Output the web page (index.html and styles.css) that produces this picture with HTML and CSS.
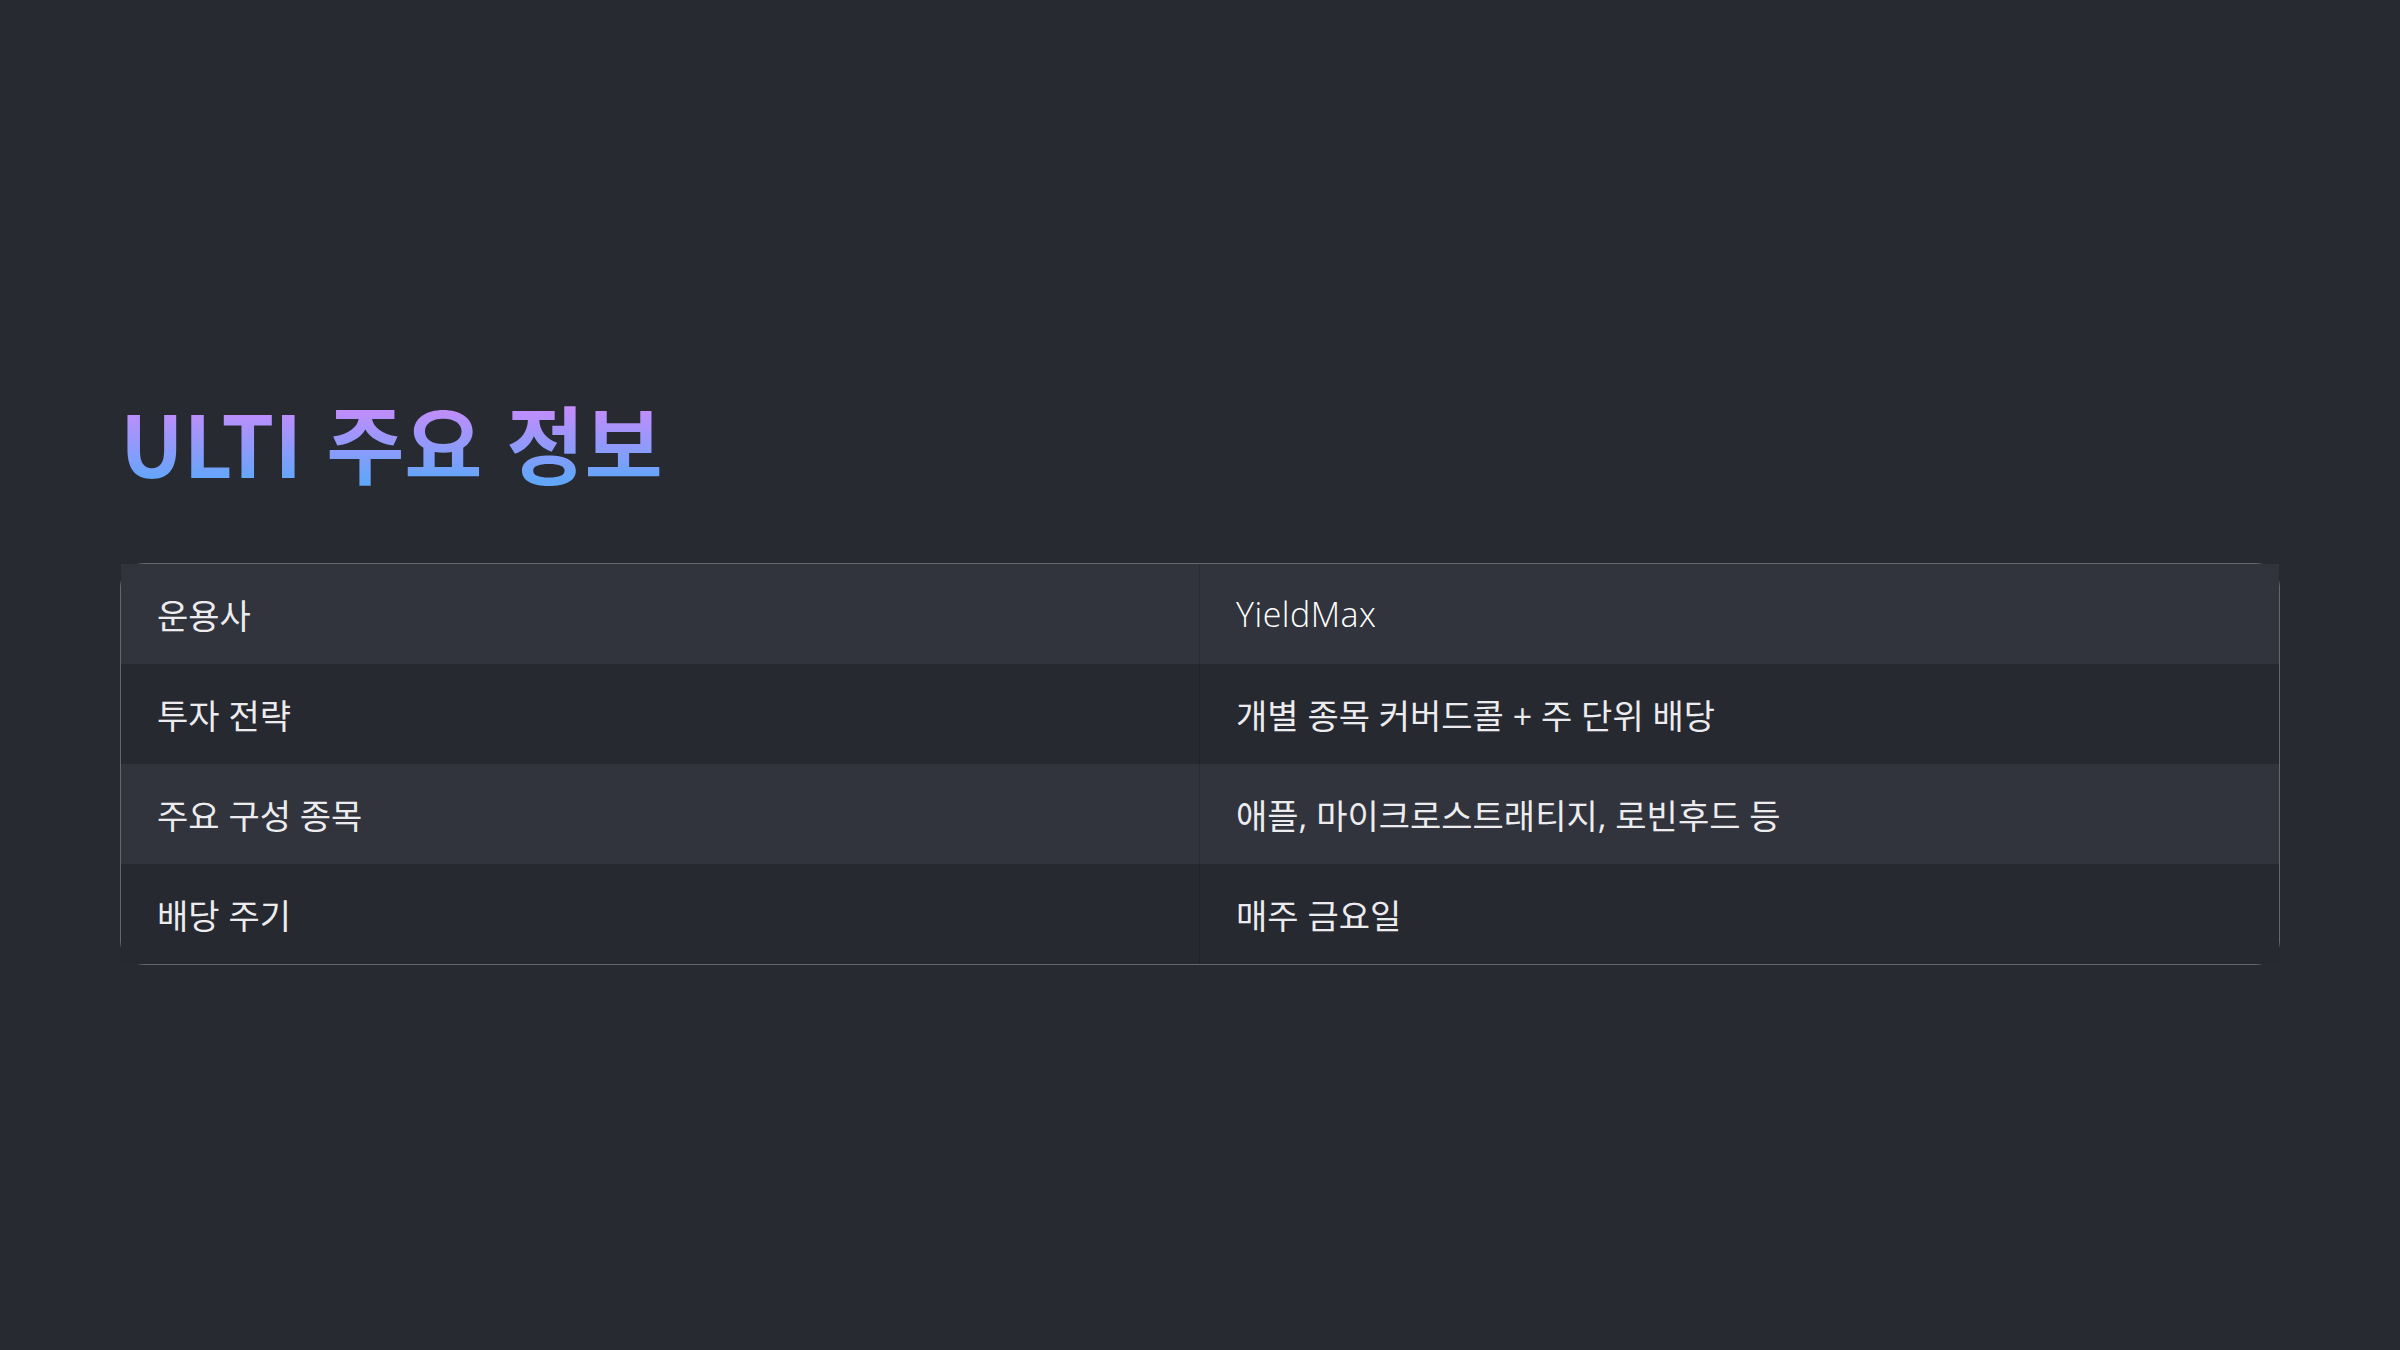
FILE: index.html
```html
<!DOCTYPE html>
<html lang="ko">
  <head>
    <meta charset="UTF-8" />
    <meta name="viewport" content="width=device-width, initial-scale=1.0" />
    <title>ULTI 주요 정보</title>
    <link rel="stylesheet" href="styles.css">
  </head>
  <body>
    <div class="slide">
      <h1 class="slide-title">ULTI 주요 정보</h1>

      <!-- key facts table -->
      <table class="info-table">
        <tbody>
          <tr>
            <td>운용사</td>
            <td><span class="latin">YieldMax</span></td>
          </tr>
          <tr>
            <td>투자 전략</td>
            <td>개별 종목 커버드콜 + 주 단위 배당</td>
          </tr>
          <tr>
            <td>주요 구성 종목</td>
            <td>애플, 마이크로스트래티지, 로빈후드 등</td>
          </tr>
          <tr>
            <td>배당 주기</td>
            <td>매주 금요일</td>
          </tr>
        </tbody>
      </table>
    </div>
  </body>
</html>
```

FILE: styles.css
```css
html, body {
  margin: 0;
  padding: 0;
}
body {
  background-color: #282a32;
  color: #ececef;
  font-family: "Open Sans", "Noto Sans CJK KR", sans-serif;
}
.slide {
  height: 100vh;
  box-sizing: border-box;
  padding: 0 120px;
  display: flex;
  flex-direction: column;
  justify-content: center;
}
.slide-title {
  margin: 0 0 66px 0;
  font-family: "Noto Sans CJK KR", sans-serif;
  font-size: 85px;
  font-weight: 700;
  line-height: 112px;
  align-self: flex-start;
  background: linear-gradient(to bottom, #c58cfc 20%, #62a6fa 85%);
  -webkit-background-clip: text;
  background-clip: text;
  color: transparent;
}

.info-table {
  width: 100%;
  border-collapse: separate;
  border-spacing: 0;
  border: 1px solid #64676e;
  border-radius: 24px;
}
.info-table td {
  width: 50%;
  height: 100px;
  padding: 0 36px;
  vertical-align: middle;
  font-size: 34px;
  font-weight: 400;
}
.info-table td:first-child {
  border-right: 1px solid rgba(0, 0, 0, 0.14);
}
.info-table tr:nth-child(odd) td {
  background-color: #31343c;
}
.info-table tr:nth-child(even) td {
  background-color: #262930;
}
.latin {
  color: #ffffff;
  font-weight: 300;
  letter-spacing: 0.5px;
}
```
